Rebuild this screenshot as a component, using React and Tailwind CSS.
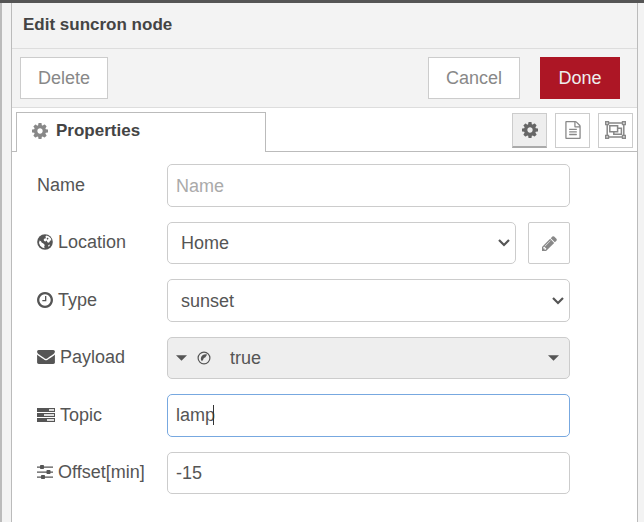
import React from 'react';

const PATHS = {
  cog: 'M1152 896q0-106-75-181t-181-75-181 75-75 181 75 181 181 75 181-75 75-181zm512-109v222q0 12-8 23t-20 13l-185 28q-19 54-39 91 35 50 107 138 10 12 10 25t-9 23q-27 37-99 108t-94 71q-12 0-26-9l-138-108q-44 23-91 38-16 136-29 186-7 28-36 28h-222q-14 0-24.5-8.5t-11.5-21.5l-28-184q-49-16-90-37l-141 107q-10 9-25 9-14 0-25-11-126-114-165-168-7-10-7-23 0-12 8-23 15-21 51-66.5t54-70.5q-27-50-41-99l-183-27q-13-2-21-12.5t-8-23.5v-222q0-12 8-23t19-13l186-28q14-46 39-92-40-57-107-138-10-12-10-24 0-10 9-23 26-36 98.5-107.5t94.5-71.5q13 0 26 10l138 107q44-23 91-38 16-136 29-186 7-28 36-28h222q14 0 24.5 8.5t11.5 21.5l28 184q49 16 90 37l142-107q9-9 24-9 13 0 25 10 129 119 165 170 7 8 7 22 0 12-8 23-15 21-51 66.5t-54 70.5q26 50 41 98l183 28q13 2 21 12.5t8 23.5z',
  pencil: 'M491 1536l91-91-235-235-91 91v107h128v128h107zm523-928q0-22-22-22-10 0-17 7l-542 542q-7 7-7 17 0 22 22 22 10 0 17-7l542-542q7-7 7-17zm-54-192l416 416-832 832h-416v-416zm683 96q0 53-37 90l-166 166-416-416 166-165q36-38 90-38 53 0 91 38l235 234q37 39 37 91z',
  clock: 'M1024 544v448q0 14-9 23t-23 9h-320q-14 0-23-9t-9-23v-64q0-14 9-23t23-9h224v-352q0-14 9-23t23-9h64q14 0 23 9t9 23zm416 352q0-148-73-273t-198-198-273-73-273 73-198 198-73 273 73 273 198 198 273 73 273-73 198-198 73-273zm224 0q0 209-103 385.5t-279.5 279.5-385.5 103-385.5-103-279.5-279.5-103-385.5 103-385.5 279.5-279.5 385.5-103 385.5 103 279.5 279.5 103 385.5z',
  envelope: 'M1792 710v794q0 66-47 113t-113 47h-1472q-66 0-113-47t-47-113v-794q44 49 101 87 362 246 497 345 57 42 92.5 65.5t94.5 48 110 24.5h2q51 0 110-24.5t94.5-48 92.5-65.5q170-123 498-345 57-39 100-87zm0-294q0 79-49 151t-122 123q-376 261-468 325-10 7-42.5 31t-54 38-52 32.5-57.5 27-50 9h-2q-23 0-50-9t-57.5-27-52-32.5-54-38-42.5-31q-91-64-262-182.5t-205-142.5q-62-42-117-115.5t-55-136.5q0-78 41.5-130t118.5-52h1472q65 0 112.5 47t47.5 113z',
  fileText: 'M1596 380q28 28 48 76t20 88v1152q0 40-28 68t-68 28h-1344q-40 0-68-28t-28-68v-1600q0-40 28-68t68-28h896q40 0 88 20t76 48zm-444-244v376h376q-10-29-22-41l-313-313q-12-12-41-22zm384 1528v-1024h-416q-40 0-68-28t-28-68v-416h-768v1536h1280zm-1024-864q0-14 9-23t23-9h704q14 0 23 9t9 23v64q0 14-9 23t-23 9h-704q-14 0-23-9t-9-23v-64zm736 224q14 0 23 9t9 23v64q0 14-9 23t-23 9h-704q-14 0-23-9t-9-23v-64q0-14 9-23t23-9h704zm0 256q14 0 23 9t9 23v64q0 14-9 23t-23 9h-704q-14 0-23-9t-9-23v-64q0-14 9-23t23-9h704z',
};

function Glyph({ name, className, viewBox = '128 128 1536 1536' }) {
  return (
    <svg viewBox={viewBox} className={className} fill="currentColor" aria-hidden="true">
      <path d={PATHS[name]} />
    </svg>
  );
}

function Globe() {
  return (
    <svg viewBox="0 0 16 16" className="h-4 w-4" aria-hidden="true">
      <circle cx="8" cy="8" r="7.8" fill="#555" />
      <path d="M8.4 2.4 9.6 1.6 12 2.4 13.8 4.2 14.4 6.2 13 6.8 12.4 8.2 11 8.8 10 7.6 9.8 6.6 8.4 7.4 7.2 7 6.6 5.8 7.6 4.6 9 4.2z" fill="#fff" />
      <path d="M10.2 3.6 11.6 4.6 10.8 5.8 9.6 5z" fill="#555" />
      <path d="M2.6 6.4 4 7.2 4.6 8.6 6.4 9.6 7.8 11 7.2 12.4 7.6 14.2 5.2 13.6 3.2 11.8 2 9z" fill="#fff" />
      <path d="M11.2 11.2 12.8 10.4 12.6 12 11.4 12.8z" fill="#fff" />
    </svg>
  );
}

function Tasks() {
  return (
    <svg viewBox="0 0 18 14" className="h-[14px] w-[18px]" aria-hidden="true">
      <path d="M0 0h18v4H0zM0 5h18v4H0zM0 10h18v4H0z" fill="#555" />
      <path d="M12 1h5v2h-5zM7 6h10v2H7zM10 11h7v2h-7z" fill="#ddd" />
    </svg>
  );
}

function Sliders() {
  return (
    <svg viewBox="0 0 16 14" className="h-[14px] w-4" fill="#555" aria-hidden="true">
      <path d="M0 1.4h16v1.3H0zM0 6.4h16v1.3H0zM0 11.4h16v1.3H0z" />
      <rect x="3" width="4" height="4" rx=".8" />
      <rect x="9.5" y="5" width="4" height="4" rx=".8" />
      <rect x="4" y="10" width="4" height="4" rx=".8" />
    </svg>
  );
}

function ObjectGroup() {
  return (
    <svg viewBox="0 0 21 18" className="h-[18px] w-[21px]" fill="none" stroke="#888" aria-hidden="true">
      <path d="M2.5 1.9h16M2.5 16.1h16M2.2 3v12M18.8 3v12" strokeWidth="1.5" />
      <path d="M.7.7h2.8v2.8H.7zM17.5.7h2.8v2.8h-2.8zM.7 14.5h2.8v2.8H.7zM17.5 14.5h2.8v2.8h-2.8z" fill="#fff" strokeWidth="1.4" />
      <path d="M4.8 4.8h7.8v6H4.8z" strokeWidth="1.5" />
      <path d="M12.6 7.2h3.8v6H8.8v-2.4" strokeWidth="1.5" />
    </svg>
  );
}

function BoolIcon() {
  return (
    <svg viewBox="0 0 14 14" className="h-[14px] w-[14px]" fill="none" aria-hidden="true">
      <circle cx="7" cy="7" r="5.9" stroke="#555" strokeWidth="1.2" />
      <path d="M10.2 3.6A4.6 4.6 0 0 0 3.8 8Q4 9.6 5 10.2L6.4 8.2Q6.4 6.4 8.2 6.4z" fill="#555" />
    </svg>
  );
}

function Caret() {
  return (
    <svg viewBox="0 0 12 6" className="h-[6px] w-[11px]" fill="#555" aria-hidden="true">
      <path d="M0 0h12L6 6z" />
    </svg>
  );
}

function Select({ id, options }) {
  return (
    <div className="relative min-w-0 flex-1">
      <select id={id} className={`${FIELD} h-full appearance-none pl-[13px]`}>
        {options.map((o) => (
          <option key={o}>{o}</option>
        ))}
      </select>
      <svg viewBox="0 0 12 8" className="pointer-events-none absolute top-1/2 right-[6px] h-2 w-3 -translate-y-1/2" fill="none" stroke="#555" strokeWidth="2.2" aria-hidden="true">
        <path d="M1 1l5 5 5-5" />
      </svg>
    </div>
  );
}

const FIELD = 'w-full rounded-[5px] border border-[#ccc] bg-white text-[#555] outline-none';
const BUTTON = 'h-[42px] border border-[#ccc] bg-white text-[#888]';
const TALL = 'flex h-[43px]';
const SHORT = 'flex h-[42px]';

function Row({ id, icon, label, size, children }) {
  return (
    <div className={size}>
      <label htmlFor={id} className="flex w-[130px] shrink-0 items-center gap-[5px] pb-[2px] whitespace-nowrap">
        {icon}
        {label}
      </label>
      {children}
    </div>
  );
}

export default function App() {
  return (
    <div className="flex min-h-screen flex-col border-t-[3px] border-[#555] bg-[#f3f3f3] font-['Liberation_Sans',Arial,sans-serif] text-[18px] leading-6 text-[#555]">
      <div className="flex flex-1 border-l-2 border-[#bbb] pr-[6px] pl-[9px]">
        <main className="flex min-w-0 flex-1 flex-col border-r border-l border-[#bbb] bg-white">
          <h1 className="h-[46px] border-b border-[#ddd] bg-[#f3f3f3] px-[11px] pt-[10px] text-[17px] font-bold text-[#444]">
            Edit suncron node
          </h1>
          <div className="flex h-[59px] items-center border-b border-[#ddd] bg-[#f3f3f3] pr-[17px] pl-2">
            <button className={`${BUTTON} w-[88px]`}>Delete</button>
            <div className="ml-auto flex gap-5">
              <button className={`${BUTTON} w-[92px]`}>Cancel</button>
              <button className="h-[42px] w-20 bg-[#ad1625] text-[#eee]">Done</button>
            </div>
          </div>

          <div className="flex h-11 items-end border-b border-[#bbb] pr-1 pl-1">
            <button className="-mb-px flex h-10 w-[250px] items-center gap-2 border border-b-0 border-[#bbb] bg-white pb-[3px] pl-[15px] text-[17px] font-bold text-[#444]">
              <Glyph name="cog" className="h-4 w-4 text-[#888]" />
              Properties
            </button>
            <div className="mb-[3px] ml-auto flex gap-2">
              <button aria-label="Properties" className="flex h-[35px] w-[35px] items-center justify-center border border-b-2 border-[#ccc] border-b-[#aaa] bg-[#eee] text-[#666]">
                <Glyph name="cog" className="h-4 w-4" />
              </button>
              <button aria-label="Description" className="flex h-[35px] w-[35px] items-center justify-center border border-[#ccc] bg-white pb-[2px] text-[#888]">
                <Glyph name="fileText" viewBox="128 0 1536 1792" className="h-[18px] w-4" />
              </button>
              <button aria-label="Appearance" className="flex h-[35px] w-[35px] items-center justify-center border border-[#ccc] bg-white pb-[2px]">
                <ObjectGroup />
              </button>
            </div>
          </div>

          <form className="flex flex-col gap-[15px] pt-3 pr-[67px] pb-7 pl-[25px]">
            <Row id="name" label="Name" size={TALL}>
              <input id="name" placeholder="Name" className={`${FIELD} px-2 placeholder:text-[#aaa]`} />
            </Row>
            <Row id="location" label="Location" size={SHORT} icon={<Globe />}>
              <Select id="location" options={['Home']} />
              <button type="button" aria-label="Edit location" className={`${BUTTON} ml-3 flex w-[42px] items-center justify-center rounded-[2px]`}>
                <Glyph name="pencil" className="h-[15px] w-[15px]" />
              </button>
            </Row>
            <Row id="type" label="Type" size={TALL} icon={<Glyph name="clock" className="h-4 w-4" />}>
              <Select id="type" options={['sunset']} />
            </Row>
            <Row id="payload" label="Payload" size={SHORT} icon={<Glyph name="envelope" viewBox="0 256 1792 1408" className="h-[14px] w-[18px]" />}>
              <button id="payload" type="button" className="flex min-w-0 flex-1 items-center rounded-[5px] border border-[#ccc] bg-[#eee] pr-[10px] pl-2">
                <Caret />
                <span className="ml-[10px]"><BoolIcon /></span>
                <span className="ml-[19px]">true</span>
                <span className="ml-auto"><Caret /></span>
              </button>
            </Row>
            <Row id="topic" label="Topic" size={TALL} icon={<Tasks />}>
              <div className="relative min-w-0 flex-1">
                <input id="topic" defaultValue="lamp" className="h-full w-full rounded-[5px] border border-[#77a8e0] bg-white px-2 text-[#555] outline-none" />
                <span className="absolute top-[11px] left-[46px] h-5 w-px bg-[#333]" />
              </div>
            </Row>
            <Row id="offset" label="Offset[min]" size={SHORT} icon={<Sliders />}>
              <input id="offset" defaultValue="-15" className={`${FIELD} px-2`} />
            </Row>
          </form>
        </main>
      </div>
    </div>
  );
}
